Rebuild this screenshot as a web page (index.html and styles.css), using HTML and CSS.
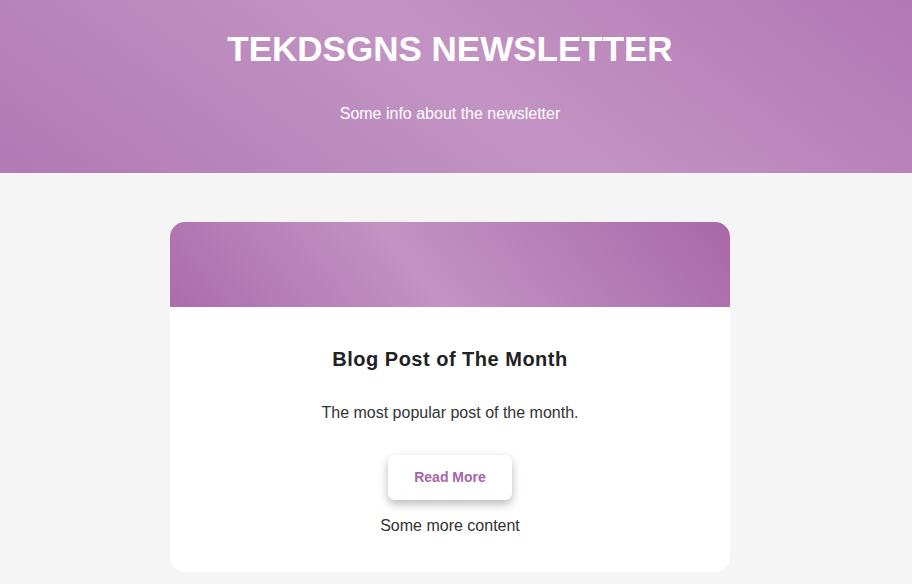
FILE: index.html
```html
<!DOCTYPE html>
<html lang="en">
<head>
<meta charset="utf-8">
<title>TEKDSGNS Newsletter</title>
<link rel="stylesheet" href="styles.css">
</head>
<body>
<header class="hero">
  <h1 class="hero-title">TEKDSGNS NEWSLETTER</h1>
  <p class="hero-sub">Some info about the newsletter</p>
</header>
<main class="content">
  <article class="card">
    <div class="card-banner"></div>
    <div class="card-body">
      <h2 class="card-title">Blog Post of The Month</h2>
      <p class="card-text">The most popular post of the month.</p>
      <a class="btn" href="#">Read More</a>
      <p class="card-more">Some more content</p>
    </div>
  </article>
</main>
</body>
</html>
```
FILE: styles.css
```css
html, body {
  margin: 0;
  padding: 0;
}
body {
  background: #f5f5f5;
  font-family: "Liberation Sans", Arial, sans-serif;
  color: #333;
}
.hero {
  height: 173px;
  box-sizing: border-box;
  padding: 30px 12px 0 0;
  text-align: center;
  color: #fff;
  background: linear-gradient(37deg, #b07ab4 0%, #c394c3 51%, #b277b4 100%);
}
.hero-title {
  margin: 0;
  font-size: 35px;
  line-height: 37px;
  font-weight: bold;
}
.hero-sub {
  margin: 38px 0 0;
  font-size: 16px;
  line-height: 18px;
}
.content {
  display: flex;
  justify-content: center;
  padding: 49px 12px 0 0;
}
.card {
  width: 560px;
  background: #fff;
  border-radius: 15px;
  overflow: hidden;
}
.card-banner {
  height: 85px;
  background: linear-gradient(52deg, #ac6cac 0%, #c293c3 44%, #a968a9 100%);
}
.card-body {
  display: flex;
  flex-direction: column;
  align-items: center;
  padding: 40px 20px 37px;
  text-align: center;
}
.card-title {
  margin: 0;
  font-size: 20px;
  line-height: 24px;
  font-weight: bold;
  letter-spacing: 0.5px;
  color: #222;
}
.card-text {
  margin: 33px 0 0;
  font-size: 16px;
  line-height: 18px;
}
.btn {
  margin-top: 33px;
  display: inline-block;
  padding: 14px 26px;
  font-size: 14px;
  line-height: 17px;
  font-weight: bold;
  color: #a864a8;
  background: #fff;
  text-decoration: none;
  border-radius: 7px;
  box-shadow: 0 4px 10px rgba(0, 0, 0, 0.28);
}
.card-more {
  margin: 17px 0 0;
  font-size: 16px;
  line-height: 18px;
}
```
